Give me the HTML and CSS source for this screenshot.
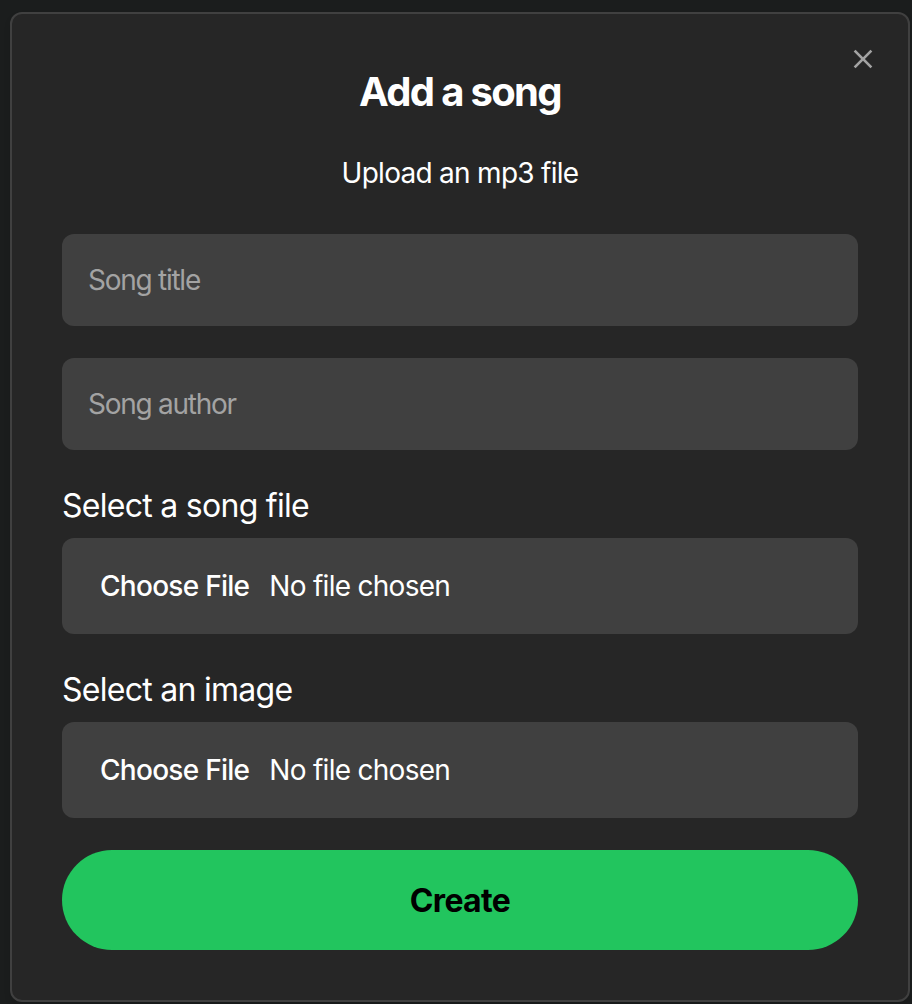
FILE: index.html
```html
<!DOCTYPE html>
<html lang="en">
<head>
<meta charset="utf-8">
<title>Add a song</title>
<link rel="stylesheet" href="styles.css">
</head>
<body>
<div class="overlay">
  <div class="modal" role="dialog" aria-labelledby="modal-title">
    <h2 class="modal-title" id="modal-title">Add a song</h2>
    <p class="modal-desc">Upload an mp3 file</p>
    <form class="form">
      <input class="field" type="text" placeholder="Song title">
      <input class="field" type="text" placeholder="Song author">
      <div class="group">
        <div class="label">Select a song file</div>
        <div class="file">
          <span class="file-btn">Choose File</span>
          <span class="file-name">No file chosen</span>
        </div>
      </div>
      <div class="group">
        <div class="label">Select an image</div>
        <div class="file">
          <span class="file-btn">Choose File</span>
          <span class="file-name">No file chosen</span>
        </div>
      </div>
      <button class="submit" type="button">Create</button>
    </form>
    <button class="close" type="button" aria-label="Close">
      <svg viewBox="0 0 512 512" width="32" height="32" aria-hidden="true">
        <path fill="currentColor" d="M405 136.798L375.202 107 256 226.202 136.798 107 107 136.798 226.202 256 107 375.202 136.798 405 256 285.798 375.202 405 405 375.202 285.798 256z"/>
      </svg>
    </button>
  </div>
</div>
</body>
</html>
```
FILE: styles.css
```css
* { box-sizing: border-box; }
html, body {
  margin: 0;
  padding: 0;
  height: 100%;
}
body {
  background: #1b1d1d;
  font-family: Inter, "Noto Sans", "Liberation Sans", sans-serif;
  color: #ffffff;
  letter-spacing: -0.045em;
}
.overlay {
  min-height: 100%;
  padding: 12px 0 0 10px;
}
.modal {
  position: relative;
  width: 900px;
  height: 990px;
  background: #262626;
  border: 2px solid #404040;
  border-radius: 12px;
  padding: 50px;
  box-shadow: 0 4px 6px rgba(0,0,0,0.1);
}
.modal-title {
  margin: 0 0 32px;
  font-size: 40px;
  line-height: 56px;
  font-weight: 700;
  letter-spacing: -0.042em;
  text-align: center;
}
.modal-desc {
  margin: 0 0 40px;
  font-size: 28px;
  line-height: 42px;
  text-align: center;
}
.form {
  display: flex;
  flex-direction: column;
  gap: 32px;
}
.field {
  display: block;
  width: 100%;
  height: 92px;
  border: 2px solid transparent;
  border-radius: 12px;
  background: #404040;
  padding: 0 24px;
  font-family: inherit;
  font-size: 28px;
  letter-spacing: -0.045em;
  color: #ffffff;
  outline: none;
}
.field::placeholder { color: #a3a3a3; }
.label {
  font-size: 32px;
  line-height: 48px;
  padding-bottom: 8px;
}
.file {
  display: flex;
  align-items: center;
  height: 96px;
  border: 2px solid transparent;
  border-radius: 12px;
  background: #404040;
  padding: 0 24px;
  font-size: 28px;
}
.file-btn {
  font-weight: 500;
  padding: 0 12px;
  margin-right: 8px;
}
.submit {
  display: block;
  width: 100%;
  height: 100px;
  border: 2px solid transparent;
  border-radius: 999px;
  background: #22c55e;
  color: #000000;
  font-family: inherit;
  font-size: 32px;
  font-weight: 700;
  letter-spacing: -0.02em;
  cursor: pointer;
}
.close {
  position: absolute;
  top: 20px;
  right: 20px;
  width: 50px;
  height: 50px;
  display: inline-flex;
  align-items: center;
  justify-content: center;
  border: 0;
  padding: 0;
  background: transparent;
  color: #a3a3a3;
  border-radius: 50%;
}
.close svg { display: block; }
```
